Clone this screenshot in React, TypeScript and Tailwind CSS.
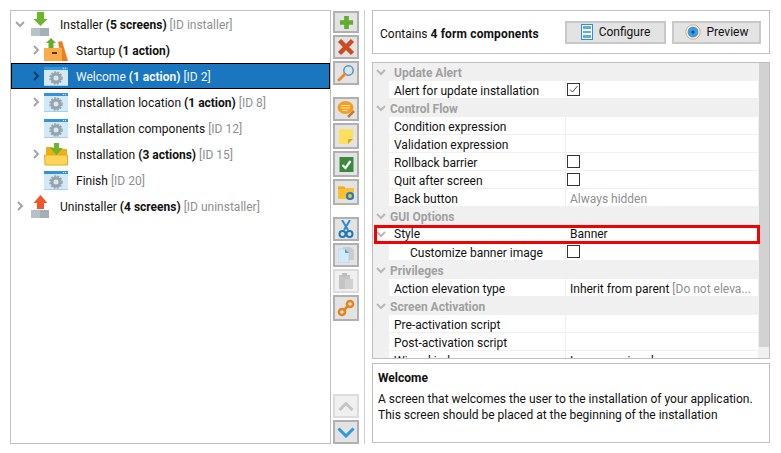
import React from "react";

function Box({ up = false }: { up?: boolean }) {
  return (
    <svg width="26" height="26" viewBox="0 0 26 26" className="shrink-0">
      <rect x="3" y="17" width="18" height="8" fill="#b7c2c6" />
      <rect x="12" y="17" width="9" height="8" fill="#a3b0b5" />
      {up ? (
        <path d="M12.5 2 L19.5 10 H16 V16 H9 V10 H5.5 Z" fill="#f0562a" />
      ) : (
        <path d="M9 1 H16 V8 H19.5 L12.5 15 L5.5 8 H9 Z" fill="#6cb52d" />
      )}
    </svg>
  );
}

function ScreenIcon() {
  return (
    <svg width="24" height="19" viewBox="0 0 24 19" className="shrink-0">
      <rect x="0" y="0" width="24" height="19" fill="#d3e9f8" />
      <rect x="0" y="18" width="24" height="1" fill="#a5d0ec" />
      <rect x="0" y="0" width="24" height="3" fill="#3593dc" />
      <rect x="19" y="1" width="1" height="1" fill="#fff" />
      <rect x="21" y="1" width="1" height="1" fill="#fff" />
      <circle cx="12" cy="11" r="4" fill="none" stroke="#97a3a9" strokeWidth="3" />
      <circle cx="12" cy="11" r="6" fill="none" stroke="#97a3a9" strokeWidth="1.5" strokeDasharray="2 1.2" />
    </svg>
  );
}

function StartupIcon() {
  return (
    <svg width="24" height="24" viewBox="0 0 24 24" className="shrink-0">
      <path d="M14 4 L18 3 L24 23 H18 Z" fill="#f07d1c" />
      <rect x="0" y="10" width="18" height="13" fill="#fbab47" />
      <rect x="8" y="14" width="5" height="2" fill="#4a3a20" />
      <path d="M7 0 L12 5 H9.5 V10 H4.5 V5 H2 Z" fill="#63ad2b" />
    </svg>
  );
}

function FolderIcon() {
  return (
    <svg width="24" height="24" viewBox="0 0 24 24" className="shrink-0">
      <path d="M2 5 H9 L10 7 H23 V16 H2 Z" fill="#f3ac13" />
      <path d="M0.5 13 H23.5 V23 H1 Z" fill="#fcd55a" stroke="#e3ac1e" strokeWidth="1" />
      <path d="M10 1 H15 V6 H19 L12.5 13 L6 6 H10 Z" fill="#6cb52d" />
    </svg>
  );
}

function Chevron({ open = false, color = "#a6a6a6" }: { open?: boolean; color?: string }) {
  return (
    <svg width="10" height="10" viewBox="0 0 10 10" className="shrink-0">
      {open ? (
        <path d="M1 3 L5 7 L9 3" fill="none" stroke={color} strokeWidth={2} />
      ) : (
        <path d="M3 1 L7 5 L3 9" fill="none" stroke={color} strokeWidth={2} />
      )}
    </svg>
  );
}

type TreeRow = {
  top?: boolean;
  chevron?: "open" | "closed";
  icon: React.ReactNode;
  name: string;
  bold?: string;
  id: string;
  selected?: boolean;
};

const treeRows: TreeRow[] = [
  { top: true, chevron: "open", icon: <Box />, name: "Installer ", bold: "(5 screens)", id: " [ID installer]" },
  { chevron: "closed", icon: <StartupIcon />, name: "Startup ", bold: "(1 action)", id: "" },
  { chevron: "closed", icon: <ScreenIcon />, name: "Welcome ", bold: "(1 action)", id: " [ID 2]", selected: true },
  { chevron: "closed", icon: <ScreenIcon />, name: "Installation location ", bold: "(1 action)", id: " [ID 8]" },
  { icon: <ScreenIcon />, name: "Installation components", id: " [ID 12]" },
  { chevron: "closed", icon: <FolderIcon />, name: "Installation ", bold: "(3 actions)", id: " [ID 15]" },
  { icon: <ScreenIcon />, name: "Finish", id: " [ID 20]" },
  { top: true, chevron: "closed", icon: <Box up />, name: "Uninstaller ", bold: "(4 screens)", id: " [ID uninstaller]" },
];

function Tree() {
  return (
    <div className="w-[321px] h-[434px] border border-[#bfbfbf] overflow-hidden bg-white shrink-0">
      {treeRows.map((r) => (
        <div
          key={r.name}
          className={`h-[26px] flex items-center whitespace-pre ${r.top ? "pl-[4px]" : "pl-[20px]"} ${
            r.selected ? "bg-[#1a76bf] text-[#f2f7fb] outline outline-1 outline-offset-[-1px] outline-black" : "text-[#111]"
          }`}
        >
          <span className="w-[13px] flex justify-start">
            {r.chevron && <Chevron open={r.chevron === "open"} color={r.selected ? "#0e3f66" : "#a6a6a6"} />}
          </span>
          <span className={`flex justify-center items-center ${r.top ? "w-[26px] mr-[6px]" : "w-[24px] mr-[8px]"}`}>
            {r.icon}
          </span>
          <span className="pt-[2px]">
            {r.name}
            {r.bold && <span className="font-bold">{r.bold}</span>}
            <span className={r.selected ? "text-[#f2f7fb]" : "text-[#8f8f8f]"}>{r.id}</span>
          </span>
        </div>
      ))}
    </div>
  );
}

function ToolBtn({ children, disabled = false, h = "h-[26px]" }: { children: React.ReactNode; disabled?: boolean; h?: string }) {
  return (
    <div
      className={`w-[26px] ${h} flex items-center justify-center border-2 ${
        disabled ? "border-[#dcdcdc] bg-[#f0f0f0]" : "border-[#b0b0b0] bg-[#e3e3e3]"
      }`}
    >
      {children}
    </div>
  );
}

function Toolbar() {
  return (
    <div className="w-[26px] ml-[2px] mt-px h-[433px] flex flex-col shrink-0">
      <div className="flex flex-col gap-[2px]">
        <ToolBtn h="h-[22px]">
          <svg width="15" height="15" viewBox="0 0 16 16"><path d="M5.5 1 H10.5 V5.5 H15 V10.5 H10.5 V15 H5.5 V10.5 H1 V5.5 H5.5 Z" fill="#62ad2f" /></svg>
        </ToolBtn>
        <ToolBtn h="h-[24px]">
          <svg width="18" height="18" viewBox="0 0 18 18"><path d="M2.5 2.5 L15.5 15.5 M15.5 2.5 L2.5 15.5" stroke="#cf4a22" strokeWidth="4.5" /></svg>
        </ToolBtn>
        <ToolBtn h="h-[24px]">
          <svg width="18" height="18" viewBox="0 0 18 18">
            <circle cx="11.5" cy="6.5" r="4.7" fill="#cfe8f8" stroke="#5b8fb5" strokeWidth="1.5" />
            <path d="M8 10 L2 16" stroke="#e98a2d" strokeWidth="3" strokeLinecap="round" />
          </svg>
        </ToolBtn>
      </div>
      <div className="flex flex-col gap-[2px] mt-[12px]">
        <ToolBtn h="h-[24px]">
          <svg width="18" height="18" viewBox="0 0 18 18">
            <ellipse cx="8.5" cy="7.5" rx="8" ry="6.5" fill="#f59f1f" />
            <path d="M4 5.5 H13 M4 8 H13 M5.5 10.5 H11" stroke="#fde4b4" strokeWidth="1" />
            <path d="M11 17 L17 11" stroke="#b9803d" strokeWidth="2.5" />
          </svg>
        </ToolBtn>
        <ToolBtn>
          <svg width="14" height="15" viewBox="0 0 14 15"><path d="M0 0 H14 V10 L9 15 H0 Z" fill="#fbdf5f" /><path d="M14 10 L9 15 V10 Z" fill="#d9a924" /></svg>
        </ToolBtn>
        <ToolBtn>
          <svg width="15" height="15" viewBox="0 0 14 15"><rect width="14" height="15" fill="#3a8a3d" /><path d="M3 8 L6 11 L11 4" fill="none" stroke="#fff" strokeWidth="2.2" /></svg>
        </ToolBtn>
        <ToolBtn>
          <svg width="16" height="15" viewBox="0 0 16 15">
            <path d="M0 1 H6 L7 3 H16 V14 H0 Z" fill="#fac132" />
            <path d="M0 3 H7" stroke="#e09a14" strokeWidth="1" />
            <circle cx="12" cy="11" r="3" fill="none" stroke="#1f7fc8" strokeWidth="2.2" />
          </svg>
        </ToolBtn>
      </div>
      <div className="flex flex-col gap-[2px] mt-[12px]">
        <ToolBtn h="h-[24px]">
          <svg width="16" height="18" viewBox="0 0 16 18">
            <path d="M4 0 L10 10 M12 0 L6 10" stroke="#2b8ad0" strokeWidth="2" />
            <circle cx="4.5" cy="14" r="3" fill="none" stroke="#1f78bf" strokeWidth="2" />
            <circle cx="11.5" cy="14" r="3" fill="none" stroke="#1f78bf" strokeWidth="2" />
          </svg>
        </ToolBtn>
        <ToolBtn h="h-[24px]">
          <svg width="16" height="16" viewBox="0 0 16 16">
            <path d="M5 0 H12 L16 3 V13 H5 Z" fill="#c9ccce" />
            <path d="M0 2 H7 L11 6 V16 H0 Z" fill="#d2e9f8" stroke="#a8cfe9" strokeWidth="0.6" />
            <path d="M7 2 L11 6 H7 Z" fill="#4ea0dc" />
          </svg>
        </ToolBtn>
        <ToolBtn disabled h="h-[24px]">
          <svg width="14" height="16" viewBox="0 0 14 16">
            <rect x="0" y="2" width="11" height="14" fill="#c4c4c4" />
            <rect x="3" y="0" width="5" height="3" fill="#bdbdbd" />
            <rect x="6" y="6" width="8" height="10" fill="#d0d0d0" />
          </svg>
        </ToolBtn>
        <ToolBtn>
          <svg width="18" height="18" viewBox="0 0 18 18">
            <circle cx="5" cy="13" r="3" fill="none" stroke="#e8831c" strokeWidth="2.6" />
            <circle cx="13" cy="5" r="3" fill="none" stroke="#e8831c" strokeWidth="2.6" />
            <path d="M6.5 11.5 L11.5 6.5" stroke="#e8831c" strokeWidth="2.6" />
          </svg>
        </ToolBtn>
      </div>
      <div className="flex flex-col gap-[2px] mt-auto">
        <ToolBtn disabled h="h-[24px]">
          <svg width="16" height="10" viewBox="0 0 16 10"><path d="M1.5 9 L8 2.5 L14.5 9" fill="none" stroke="#c4c4c4" strokeWidth="3" /></svg>
        </ToolBtn>
        <ToolBtn h="h-[24px]">
          <svg width="18" height="11" viewBox="0 0 18 11"><path d="M1.5 1.5 L9 9 L16.5 1.5" fill="none" stroke="#2c9ae0" strokeWidth="3" /></svg>
        </ToolBtn>
      </div>
    </div>
  );
}

function CheckBox({ checked = false }: { checked?: boolean }) {
  return (
    <span className="-ml-[3px] w-[13px] h-[13px] border border-[#333] bg-white flex items-center justify-center shrink-0">
      {checked && (
        <svg width="11" height="11" viewBox="0 0 11 11"><path d="M2 5.5 L4.5 8 L9.5 2" fill="none" stroke="#444" strokeWidth="1" /></svg>
      )}
    </span>
  );
}

function Group({ label, ml = "ml-[4px]" }: { label: string; ml?: string }) {
  return (
    <div className="h-[18px] flex items-center bg-[#f0f0f0] text-[#a0a0a0] font-bold pl-[3px]">
      <Chevron open color="#b8b8b8" />
      <span className={`${ml} pt-[2px]`}>{label}</span>
    </div>
  );
}

function PropRow({ label, value, inset = false }: { label: string; value?: React.ReactNode; inset?: boolean }) {
  return (
    <div className="h-[18px] flex bg-[#f0f0f0] pl-[16px] pr-px overflow-hidden">
      <div className={`w-[176px] h-[17px] bg-white flex items-center ${inset ? "pl-[21px]" : "pl-[5px]"} text-[#111] shrink-0`}>
        <span className="pt-[2px]">{label}</span>
      </div>
      <div className="ml-px flex-1 h-[17px] bg-white flex items-center pl-[4px] whitespace-pre">{value}</div>
    </div>
  );
}

function Props() {
  return (
    <div className="h-[297px] mt-[8px] border border-[#bfbfbf] flex overflow-hidden bg-[#f4f4f4] shrink-0">
      <div className="flex-1 min-w-0">
        <Group label="Update Alert" ml="ml-[8px]" />
        <PropRow label="Alert for update installation" value={<CheckBox checked />} />
        <Group label="Control Flow" />
        <PropRow label="Condition expression" />
        <PropRow label="Validation expression" />
        <PropRow label="Rollback barrier" value={<CheckBox />} />
        <PropRow label="Quit after screen" value={<CheckBox />} />
        <PropRow label="Back button" value={<span className="text-[#8f8f8f] pt-[2px]">Always hidden</span>} />
        <Group label="GUI Options" />
        <div className="relative">
          <div className="h-[18px] flex bg-white pl-[3px] items-center">
            <Chevron open color="#b8b8b8" />
            <span className="ml-[8px] w-[172px] text-[#111]">Style</span>
            <span className="pl-[4px] text-[#111]">Banner</span>
          </div>
          <div className="absolute left-px right-[-1px] top-0 h-[19px] border-[3px] border-[#f40000]" />
        </div>
        <PropRow label="Customize banner image" inset value={<CheckBox />} />
        <Group label="Privileges" />
        <PropRow
          label="Action elevation type"
          value={
            <span className="text-[#111] pt-[2px]">
              Inherit from parent <span className="text-[#8f8f8f]">[Do not eleva...</span>
            </span>
          }
        />
        <Group label="Screen Activation" />
        <PropRow label="Pre-activation script" />
        <PropRow label="Post-activation script" />
        <PropRow label="Wizard index" value={<span className="text-[#111] pt-[2px]">Increase wizard</span>} />
      </div>
      <div className="w-[10px] shrink-0 bg-[#f0f0f0]">
        <div className="h-[284px] bg-[#d2d2d2]" />
      </div>
    </div>
  );
}

function Btn({ icon, label, w }: { icon: React.ReactNode; label: string; w: string }) {
  return (
    <div className={`${w} h-[23px] border-2 border-[#c8c8c8] bg-[#e3e3e3] flex items-center justify-center gap-[6px] text-[#111]`}>
      {icon}
      <span>{label}</span>
    </div>
  );
}

export default function App() {
  return (
    <div
      className="w-[781px] h-[453px] bg-white flex pl-[10px] pt-[10px] text-[12px] leading-[16px]"
      style={{ fontFamily: 'Roboto, "Noto Sans", sans-serif' }}
    >
      <Tree />
      <Toolbar />
      <div className="w-px h-[434px] bg-[#cfcfcf] ml-[5px] shrink-0" />
      <div className="ml-[7px] w-[398px] flex flex-col shrink-0">
        <div className="h-[44px] border border-[#bfbfbf] flex items-center pl-[7px] text-[#111] shrink-0">
          <span className="pt-[4px]">Contains</span>
          <span className="font-bold ml-[3px] pt-[4px] tracking-[0.15px]">4 form components</span>
          <div className="ml-auto mr-[8px] flex gap-[6px]">
            <Btn
              w="w-[101px]"
              label="Configure"
              icon={
                <svg width="12" height="16" viewBox="0 0 12 16">
                  <rect x="0.5" y="0.5" width="11" height="15" fill="#fff" stroke="#2b8fd6" />
                  <rect x="2" y="2" width="8" height="3" fill="#58aee6" />
                  <rect x="2" y="7" width="8" height="2" fill="#58aee6" />
                  <rect x="2" y="11" width="8" height="3" fill="#58aee6" />
                </svg>
              }
            />
            <Btn
              w="w-[89px]"
              label="Preview"
              icon={
                <svg width="16" height="16" viewBox="0 0 16 16">
                  <circle cx="8" cy="8" r="7.2" fill="#fff" stroke="#e8a268" strokeWidth="1" />
                  <circle cx="8" cy="8" r="5.5" fill="#3a9de0" />
                  <circle cx="8" cy="8" r="1.5" fill="#123a5c" />
                </svg>
              }
            />
          </div>
        </div>
        <Props />
        <div className="mt-[4px] h-[80px] border border-[#bfbfbf] pl-[5px] pt-[6px] text-[#111] shrink-0">
          <div className="font-bold">Welcome</div>
          <div className="mt-[5px]">A screen that welcomes the user to the installation of your application.</div>
          <div>This screen should be placed at the beginning of the installation</div>
        </div>
      </div>
    </div>
  );
}
